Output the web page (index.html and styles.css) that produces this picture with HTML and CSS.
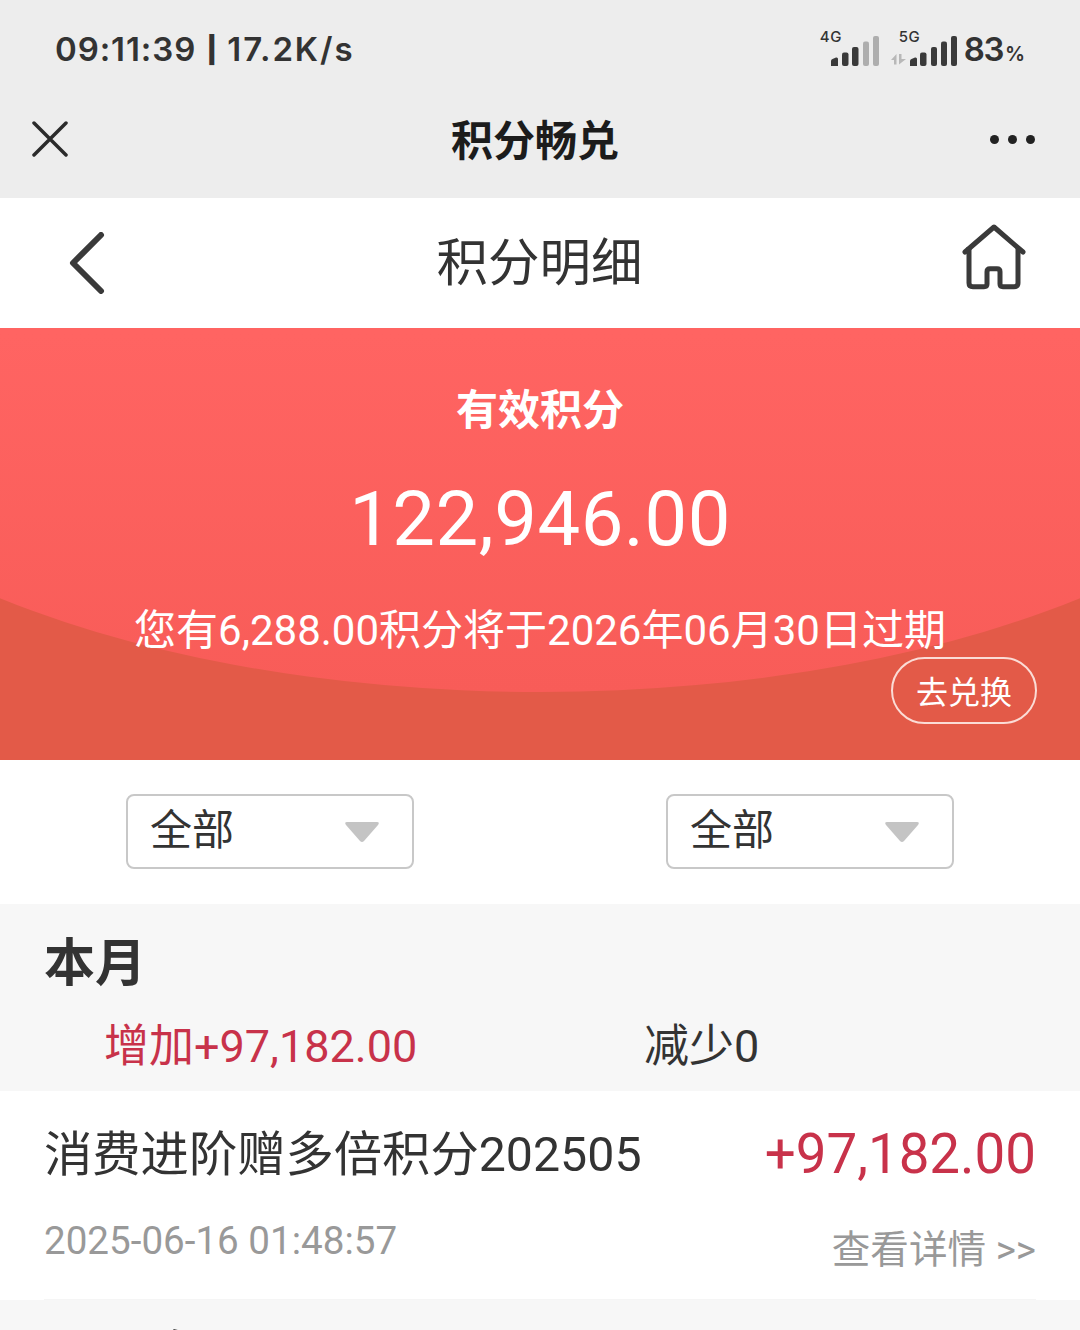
FILE: index.html
```html
<!DOCTYPE html>
<html lang="zh">
<head>
    <meta charset="UTF-8">
    <meta name="viewport" content="width=device-width, initial-scale=1.0">
    <title>积分明细</title>
    <link rel="stylesheet" href="styles.css">
</head>
<body>
    <div class="page">
        <div class="status-bar">
            <div class="status-time"><span class="status-clock">09:11:39</span> <span class="status-pipe">|</span> <span class="status-speed">17.2K/s</span></div>
            <div class="status-right">
                <div class="signal">
                    <span class="net-label">4G</span>
                    <svg width="48" height="31" viewBox="0 0 48 31">
                        <path d="M0 31V26Q0 24.500 1.500 24L5 22.500Q7 22 7 24V31Z" fill="#3a3a3a"/>
                        <rect x="11" y="17.500" width="6.500" height="13.500" rx="2" fill="#3a3a3a"/>
                        <rect x="21" y="12" width="6.500" height="19" rx="2" fill="#3a3a3a"/>
                        <rect x="32" y="6.500" width="6" height="24.500" rx="2" fill="#aeaeae"/>
                        <rect x="42" y="1" width="6" height="30" rx="2" fill="#aeaeae"/>
                    </svg>
                </div>
                <div class="signal signal-5g">
                    <span class="net-label">5G</span>
                    <svg width="67" height="31" viewBox="0 0 67 31">
                        <path d="M1 25L6.500 19V29.500H4V25Z M9 19H11.500V24H16L9 29.500Z" fill="#b8b8b8"/>
                        <path d="M20 31V26Q20 24.500 21.500 24L25 22.500Q27 22 27 24V31Z" fill="#3a3a3a"/>
                        <rect x="30" y="17.500" width="6.500" height="13.500" rx="2" fill="#3a3a3a"/>
                        <rect x="41" y="12" width="6" height="19" rx="2" fill="#3a3a3a"/>
                        <rect x="51" y="6.500" width="6" height="24.500" rx="2" fill="#3a3a3a"/>
                        <rect x="61" y="1" width="6" height="30" rx="2" fill="#3a3a3a"/>
                    </svg>
                </div>
                <div class="battery">83<span class="battery-unit">%</span></div>
            </div>
        </div>

        <div class="title-bar">
            <svg class="title-close" width="36" height="36" viewBox="0 0 36 36">
                <path d="M2 2L34 34M34 2L2 34" stroke="#2b2b2b" stroke-width="3.500" stroke-linecap="round" fill="none"/>
            </svg>
            <div class="title-text">积分畅兑</div>
            <div class="title-more"><span></span><span></span><span></span></div>
        </div>

        <div class="nav-bar">
            <svg class="nav-back" width="36" height="62" viewBox="0 0 36 62">
                <path d="M32 3L4 31L32 59" stroke="#3a3a3a" stroke-width="6" stroke-linecap="round" stroke-linejoin="round" fill="none"/>
            </svg>
            <div class="nav-title">积分明细</div>
            <svg class="nav-home" width="64" height="68" viewBox="0 0 64 68">
                <path d="M3 30L32 5L61 30" stroke="#3a3a3a" stroke-width="5" stroke-linecap="round" stroke-linejoin="round" fill="none"/>
                <path d="M7 25V61Q7 64.700 11 64.700H22Q25 64.700 25 62V49.700Q25 46.700 28 46.700H35Q38 46.700 38 49.700V62Q38 64.700 41 64.700H52Q56 64.700 56 61V25" stroke="#3a3a3a" stroke-width="5" stroke-linejoin="round" fill="none"/>
            </svg>
        </div>

        <div class="hero">
            <div class="hero-label">有效积分</div>
            <div class="hero-amount">122,946.00</div>
            <div class="hero-note">您有6,288.00积分将于2026年06月30日过期</div>
            <div class="hero-action"><a class="exchange-btn">去兑换</a></div>
        </div>

        <div class="filters">
            <div class="select-box">
                <span>全部</span>
                <svg width="36" height="22" viewBox="0 0 36 22"><path d="M3 1H33Q36 1 34 4L20 20Q18 22 16 20L2 4Q0 1 3 1Z" fill="#c4c4c4"/></svg>
            </div>
            <div class="select-box">
                <span>全部</span>
                <svg width="36" height="22" viewBox="0 0 36 22"><path d="M3 1H33Q36 1 34 4L20 20Q18 22 16 20L2 4Q0 1 3 1Z" fill="#c4c4c4"/></svg>
            </div>
        </div>

        <div class="month">
            <div class="month-title">本月</div>
            <div class="month-sums">
                <div class="sum-up">增加+97,182.00</div>
                <div class="sum-down">减少0</div>
            </div>
        </div>

        <div class="record">
            <div class="record-top">
                <div class="record-name">消费进阶赠多倍积分202505</div>
                <div class="record-value">+97,182.00</div>
            </div>
            <div class="record-bottom">
                <div class="record-date">2025-06-16 01:48:57</div>
                <div class="record-link">查看详情 &gt;&gt;</div>
            </div>
        </div>

        <div class="next-month">2025年05月</div>
    </div>
</body>
</html>
```

FILE: styles.css
```css
* {
    box-sizing: border-box;
}

body {
    margin: 0;
    background-color: #fff;
    font-family: Roboto, "Noto Sans CJK SC", sans-serif;
    color: #333;
}

.page {
    width: 1080px;
    height: 1330px;
    overflow: hidden;
}

.status-bar {
    height: 100px;
    background-color: #ededed;
    display: flex;
    justify-content: space-between;
    align-items: center;
    padding: 0 55px 2px 55px;
}

.status-time {
    font-family: Inter, "Noto Sans", sans-serif;
    font-size: 33px;
    font-weight: 600;
    color: #333;
}

.status-clock {
    letter-spacing: 0.9px;
}

.status-speed {
    letter-spacing: 1.9px;
}

.status-pipe {
    font-size: 26px;
    font-weight: 900;
    margin: 0 2px;
    vertical-align: 2px;
}

.status-right {
    display: flex;
    align-items: center;
    gap: 7px;
}

.signal {
    position: relative;
    width: 48px;
    height: 31px;
    margin-top: 2px;
}

.signal-5g {
    width: 67px;
    margin-left: 4px;
}

.signal svg {
    display: block;
}

.net-label {
    position: absolute;
    left: -11px;
    top: -7px;
    font-family: Inter, sans-serif;
    font-size: 15px;
    line-height: 18px;
    font-weight: 500;
    letter-spacing: 0.5px;
    color: #333;
}

.signal-5g .net-label {
    left: 9px;
}

.battery {
    font-family: Inter, sans-serif;
    font-size: 33px;
    font-weight: 600;
    letter-spacing: -1.5px;
    color: #333;
}

.battery-unit {
    font-size: 20px;
    letter-spacing: 0;
    margin-left: 2px;
}

.title-bar {
    height: 98px;
    background-color: #ededed;
    display: flex;
    align-items: center;
    justify-content: space-between;
    padding: 0 45px 20px 32px;
}

.title-text {
    font-size: 42px;
    font-weight: 700;
    color: #1c1c1c;
    margin: 0 0 4px 12px;
}

.title-more {
    display: flex;
    gap: 9px;
}

.title-more span {
    width: 9px;
    height: 9px;
    border-radius: 50%;
    background-color: #222;
}

.nav-bar {
    height: 130px;
    background-color: #fff;
    display: flex;
    align-items: center;
    justify-content: space-between;
    padding: 0 54px 0 69px;
}

.nav-title {
    font-size: 51.500px;
    color: #333;
    margin: 0 0 10px 12px;
}

.nav-home {
    margin-bottom: 14px;
}

.hero {
    position: relative;
    height: 432px;
    overflow: hidden;
    background-color: #e35a48;
    color: #fff;
    text-align: center;
}

/* lighter curved part over the darker base */
.hero::before {
    content: "";
    position: absolute;
    left: -260px;
    top: -352px;
    width: 1600px;
    height: 716px;
    border-radius: 50%;
    background: linear-gradient(to bottom, #ff6462 50%, #f85c58 100%);
}

.hero > div {
    position: relative;
}

.hero-label {
    padding-top: 57px;
    height: 109px;
    font-size: 42px;
    line-height: 52px;
    font-weight: 700;
}

.hero-amount {
    height: 142px;
    font-size: 76px;
    line-height: 84px;
    letter-spacing: 0.5px;
    padding-top: 40px;
}

.hero-note {
    font-size: 42px;
    line-height: 52px;
    margin-top: 26px;
}

.hero-action {
    display: flex;
    justify-content: flex-end;
    padding: 0 43px 0 0;
}

.exchange-btn {
    width: 146px;
    height: 67px;
    border: 2px solid #fbdcd6;
    border-radius: 34px;
    display: flex;
    align-items: center;
    justify-content: center;
    padding-bottom: 2px;
    font-size: 32px;
    color: #fff;
}

.filters {
    height: 144px;
    background-color: #fff;
    display: flex;
    align-items: center;
    justify-content: center;
    gap: 252px;
    padding-bottom: 1px;
}

.select-box {
    width: 288px;
    height: 75px;
    border: 2px solid #c8c8c8;
    border-radius: 8px;
    display: flex;
    align-items: center;
    justify-content: space-between;
    padding: 0 32px 0 22px;
    font-size: 42px;
    color: #333;
}

.select-box span {
    margin-bottom: 10px;
}

.month {
    height: 187px;
    background-color: #f7f7f7;
    padding: 31px 44px 0;
}

.month-title {
    font-size: 51px;
    line-height: 58px;
    font-weight: 700;
    color: #333;
}

.month-sums {
    display: flex;
    margin-top: 28px;
    font-size: 45px;
    line-height: 52px;
}

.sum-up {
    width: 539px;
    padding-left: 60px;
    color: #c8324a;
}

.sum-down {
    color: #333;
    padding-left: 61px;
}

.record {
    height: 209px;
    background-color: #fff;
    padding: 0 44px;
}

.record-top {
    display: flex;
    justify-content: space-between;
    padding-top: 32px;
}

.record-name {
    font-size: 48.300px;
    line-height: 62px;
    margin-top: 1px;
    color: #333;
}

.record-value {
    font-size: 54.700px;
    line-height: 62px;
    color: #c8324a;
}

.record-bottom {
    display: flex;
    justify-content: space-between;
    height: 115px;
    padding-top: 31px;
    border-bottom: 2px solid #f5f5f5;
}

.record-date {
    font-size: 38.600px;
    line-height: 48px;
    color: #999;
}

.record-link {
    font-size: 38.600px;
    line-height: 48px;
    color: #999;
    margin-top: 9px;
}

.next-month {
    height: 30px;
    background-color: #f7f7f7;
    padding: 27px 0 0 44px;
    font-size: 51px;
    line-height: 58px;
    font-weight: 700;
    color: #333;
    overflow: hidden;
}
```
